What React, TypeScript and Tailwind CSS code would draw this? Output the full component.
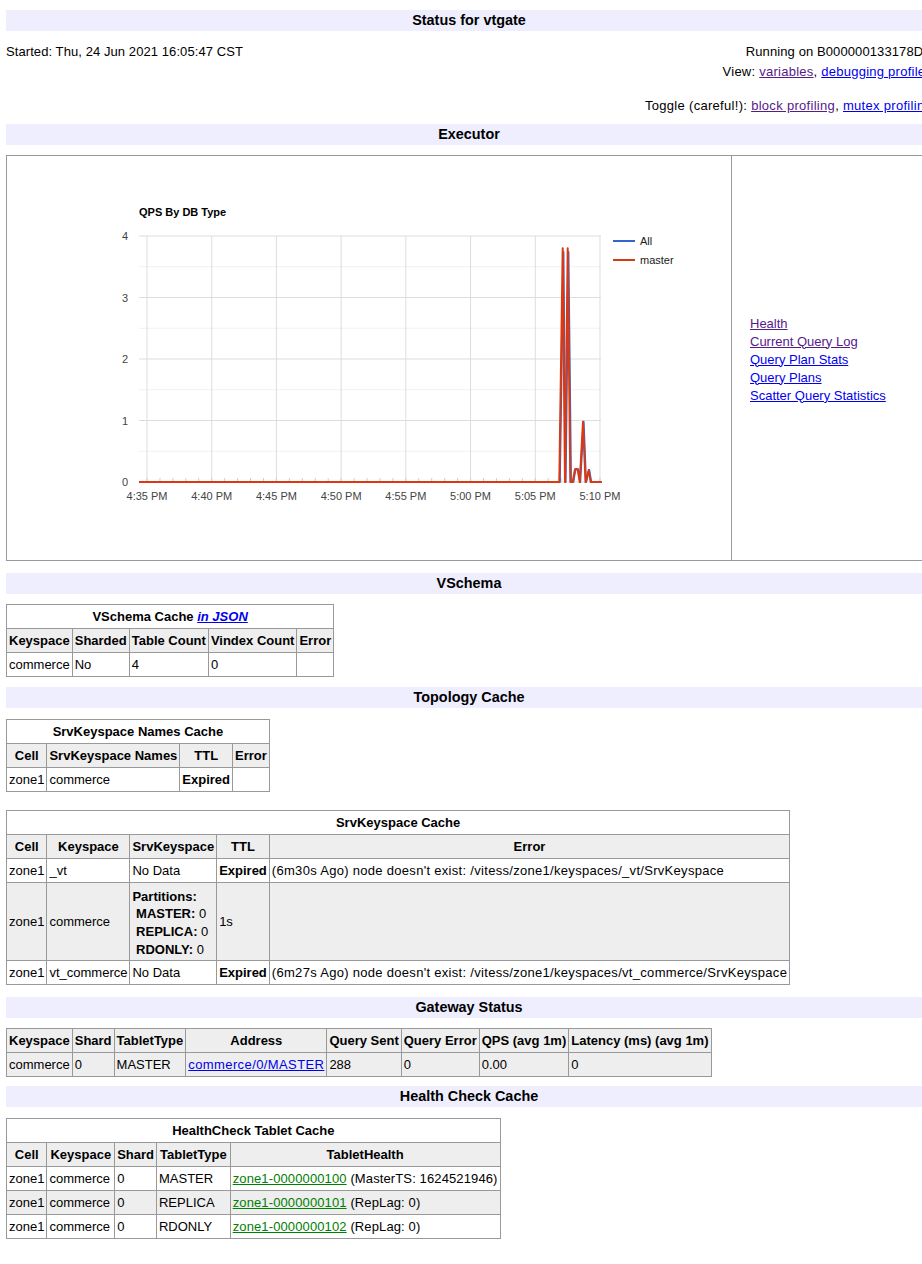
import React from "react";

const visited = "text-[#551a8b] underline";
const link = "text-[#0000ee] underline";
const green = "text-[#008000] underline";

const Band = ({ title, className = "" }: { title: string; className?: string }) => (
  <div className={`bg-[#eeeeff] text-center text-[14.4px] font-bold leading-[21px] ${className}`}>{title}</div>
);

const Th = ({ children, colSpan, className = "" }: { children?: React.ReactNode; colSpan?: number; className?: string }) => (
  <th colSpan={colSpan} className={`border border-[#999] px-[2px] py-[2px] text-center font-bold leading-[19px] whitespace-nowrap ${className}`}>
    {children}
  </th>
);

const Td = ({ children, className = "" }: { children?: React.ReactNode; className?: string }) => (
  <td className={`border border-[#999] px-[2px] py-[2px] text-left leading-[19px] whitespace-nowrap ${className}`}>{children}</td>
);

const gray = "bg-[#eeeeee]";

const xLabels = ["4:35 PM", "4:40 PM", "4:45 PM", "4:50 PM", "4:55 PM", "5:00 PM", "5:05 PM", "5:10 PM"];

const QpsChart = () => {
  const left = 139;
  const right = 601;
  const top = 236;
  const base = 482;
  const step = 64.71;
  const hLines = Array.from({ length: 9 }, (_, i) => top + i * 30.75);
  const ticks = Array.from({ length: 36 }, (_, i) => 147 + i * (step / 5)).filter((x) => x <= right);
  const red =
    "M139,482 L559.3,482 L562.7,248.3 L565,482 L567.7,248.3 L570.3,482 L572.7,482 L575,469.3 L577.7,469.3 L579.7,482 L583,421.7 L585.5,482 L588.7,470 L590.7,482 L601.7,482";
  const blue =
    "M139,482 L559.8,482 L563.4,252 L565.6,482 L568.4,252 L571,482 L573.2,482 L575.5,469.3 L578.2,469.3 L580.2,482 L583.6,421.7 L586,482 L589.2,470 L591.2,482 L601.7,482";
  return (
    <svg width="724" height="404" className="block" fontFamily="'Liberation Sans', Arial, sans-serif">
      <g transform="translate(-7,-156)">
        <text x={139} y={216} fontSize="11" fontWeight="bold" fill="#000">
          QPS By DB Type
        </text>
        {hLines.map((y, i) => (
          <line key={y} x1={left} x2={right} y1={y} y2={y} stroke={i % 2 === 0 ? "#dddddd" : "#f1f1f1"} strokeWidth="1" />
        ))}
        {xLabels.map((_, i) => (
          <line key={i} x1={147 + i * step} x2={147 + i * step} y1={top} y2={base} stroke="#dddddd" strokeWidth="1" />
        ))}
        {ticks.map((x) => (
          <line key={x} x1={x} x2={x} y1={base - 4} y2={base} stroke="#cccccc" strokeWidth="1" />
        ))}
        {["4", "3", "2", "1", "0"].map((t, i) => (
          <text key={t} x={128} y={240 + i * 61.5} fontSize="11" fill="#444" textAnchor="end">
            {t}
          </text>
        ))}
        {xLabels.map((t, i) => (
          <text key={t} x={147 + i * step} y={500} fontSize="11" fill="#444" textAnchor="middle">
            {t}
          </text>
        ))}
        <path d={blue} fill="none" stroke="#3366cc" strokeWidth="2" strokeLinejoin="round" />
        <path d={red} fill="none" stroke="#dc3912" strokeWidth="2" strokeLinejoin="round" />
        <line x1={613} x2={635} y1={241} y2={241} stroke="#3366cc" strokeWidth="2" />
        <text x={640} y={245} fontSize="11" fill="#222">
          All
        </text>
        <line x1={613} x2={635} y1={260} y2={260} stroke="#dc3912" strokeWidth="2" />
        <text x={640} y={264} fontSize="11" fill="#222">
          master
        </text>
      </g>
    </svg>
  );
};

export default function App() {
  return (
    <div className="w-[922px] overflow-hidden bg-white text-black">
      <div className="ml-[6px] w-[926px] pb-[30px] font-['Liberation_Sans',Arial,sans-serif] text-[13px] leading-[19.5px]">
        <Band title="Status for vtgate" className="mt-[10px]" />

        <div className="mt-[11px] flex justify-between">
          <div className="tracking-[0.08px]">Started: Thu, 24 Jun 2021 16:05:47 CST</div>
          <div className="text-right">
            <div className="tracking-[0.1px]">Running on B000000133178DE</div>
            <div className="tracking-[0.25px]">
              View: <a className={visited}>variables</a>, <a className={link}>debugging profiles</a>
            </div>
          </div>
        </div>
        <div className="mt-[15px] text-right tracking-[0.3px]">
          Toggle (careful!): <a className={visited}>block profiling</a>, <a className={link}>mutex profiling</a>
        </div>

        <Band title="Executor" className="mt-[8px]" />
        <div className="mt-[10px] flex h-[406px] border border-[#999]">
          <div className="w-[725px] shrink-0 border-r border-[#999]">
            <QpsChart />
          </div>
          <div className="flex flex-1 flex-col justify-center pl-[18px] pt-[4px] leading-[18px]">
            <a className={visited}>Health</a>
            <a className={visited}>Current Query Log</a>
            <a className={link}>Query Plan Stats</a>
            <a className={link}>Query Plans</a>
            <a className={link}>Scatter Query Statistics</a>
          </div>
        </div>

        <Band title="VSchema" className="mt-[12px]" />
        <table className="mt-[10px] border-collapse">
          <tbody>
            <tr>
              <Th colSpan={5}>
                VSchema Cache <a className={`${link} italic`}>in JSON</a>
              </Th>
            </tr>
            <tr className={gray}>
              <Th>Keyspace</Th>
              <Th>Sharded</Th>
              <Th>Table Count</Th>
              <Th>Vindex Count</Th>
              <Th>Error</Th>
            </tr>
            <tr>
              <Td>commerce</Td>
              <Td>No</Td>
              <Td>4</Td>
              <Td>0</Td>
              <Td></Td>
            </tr>
          </tbody>
        </table>

        <Band title="Topology Cache" className="mt-[10px]" />
        <table className="mt-[11px] border-collapse">
          <tbody>
            <tr>
              <Th colSpan={4}>SrvKeyspace Names Cache</Th>
            </tr>
            <tr className={gray}>
              <Th>Cell</Th>
              <Th>SrvKeyspace Names</Th>
              <Th>TTL</Th>
              <Th>Error</Th>
            </tr>
            <tr>
              <Td>zone1</Td>
              <Td>commerce</Td>
              <Td className="font-bold">Expired</Td>
              <Td></Td>
            </tr>
          </tbody>
        </table>

        <table className="mt-[18px] border-collapse">
          <tbody>
            <tr>
              <Th colSpan={5}>SrvKeyspace Cache</Th>
            </tr>
            <tr className={gray}>
              <Th>Cell</Th>
              <Th>Keyspace</Th>
              <Th>SrvKeyspace</Th>
              <Th>TTL</Th>
              <Th>Error</Th>
            </tr>
            <tr>
              <Td>zone1</Td>
              <Td>_vt</Td>
              <Td>No Data</Td>
              <Td className="font-bold">Expired</Td>
              <Td className="tracking-[0.3px]">(6m30s Ago) node doesn't exist: /vitess/zone1/keyspaces/_vt/SrvKeyspace</Td>
            </tr>
            <tr className={gray}>
              <Td>zone1</Td>
              <Td>commerce</Td>
              <Td>
                <div className="pt-[3px] leading-[17.7px]">
                  <div className="font-bold">Partitions:</div>
                  <div>
                    &nbsp;<b>MASTER:</b> 0
                  </div>
                  <div>
                    &nbsp;<b>REPLICA:</b> 0
                  </div>
                  <div>
                    &nbsp;<b>RDONLY:</b> 0
                  </div>
                </div>
              </Td>
              <Td>1s</Td>
              <Td></Td>
            </tr>
            <tr>
              <Td>zone1</Td>
              <Td>vt_commerce</Td>
              <Td>No Data</Td>
              <Td className="font-bold">Expired</Td>
              <Td className="tracking-[0.3px]">(6m27s Ago) node doesn't exist: /vitess/zone1/keyspaces/vt_commerce/SrvKeyspace</Td>
            </tr>
          </tbody>
        </table>

        <Band title="Gateway Status" className="mt-[12px]" />
        <table className="mt-[10px] border-collapse">
          <tbody>
            <tr className={gray}>
              <Th>Keyspace</Th>
              <Th>Shard</Th>
              <Th>TabletType</Th>
              <Th>Address</Th>
              <Th>Query Sent</Th>
              <Th>Query Error</Th>
              <Th>QPS (avg 1m)</Th>
              <Th>Latency (ms) (avg 1m)</Th>
            </tr>
            <tr className={gray}>
              <Td>commerce</Td>
              <Td>0</Td>
              <Td>MASTER</Td>
              <Td className="tracking-[0.4px]">
                <a className={link}>commerce/0/MASTER</a>
              </Td>
              <Td>288</Td>
              <Td>0</Td>
              <Td>0.00</Td>
              <Td>0</Td>
            </tr>
          </tbody>
        </table>

        <Band title="Health Check Cache" className="mt-[9px]" />
        <table className="mt-[11px] border-collapse">
          <tbody>
            <tr>
              <Th colSpan={5}>HealthCheck Tablet Cache</Th>
            </tr>
            <tr className={gray}>
              <Th>Cell</Th>
              <Th className="px-[3px]">Keyspace</Th>
              <Th>Shard</Th>
              <Th className="px-[3px]">TabletType</Th>
              <Th>TabletHealth</Th>
            </tr>
            <tr>
              <Td>zone1</Td>
              <Td>commerce</Td>
              <Td>0</Td>
              <Td>MASTER</Td>
              <Td className="tracking-[0.12px]">
                <a className={green}>zone1-0000000100</a> (MasterTS: 1624521946)
              </Td>
            </tr>
            <tr className={gray}>
              <Td>zone1</Td>
              <Td>commerce</Td>
              <Td>0</Td>
              <Td>REPLICA</Td>
              <Td className="tracking-[0.12px]">
                <a className={green}>zone1-0000000101</a> (RepLag: 0)
              </Td>
            </tr>
            <tr>
              <Td>zone1</Td>
              <Td>commerce</Td>
              <Td>0</Td>
              <Td>RDONLY</Td>
              <Td className="tracking-[0.12px]">
                <a className={green}>zone1-0000000102</a> (RepLag: 0)
              </Td>
            </tr>
          </tbody>
        </table>
      </div>
    </div>
  );
}
